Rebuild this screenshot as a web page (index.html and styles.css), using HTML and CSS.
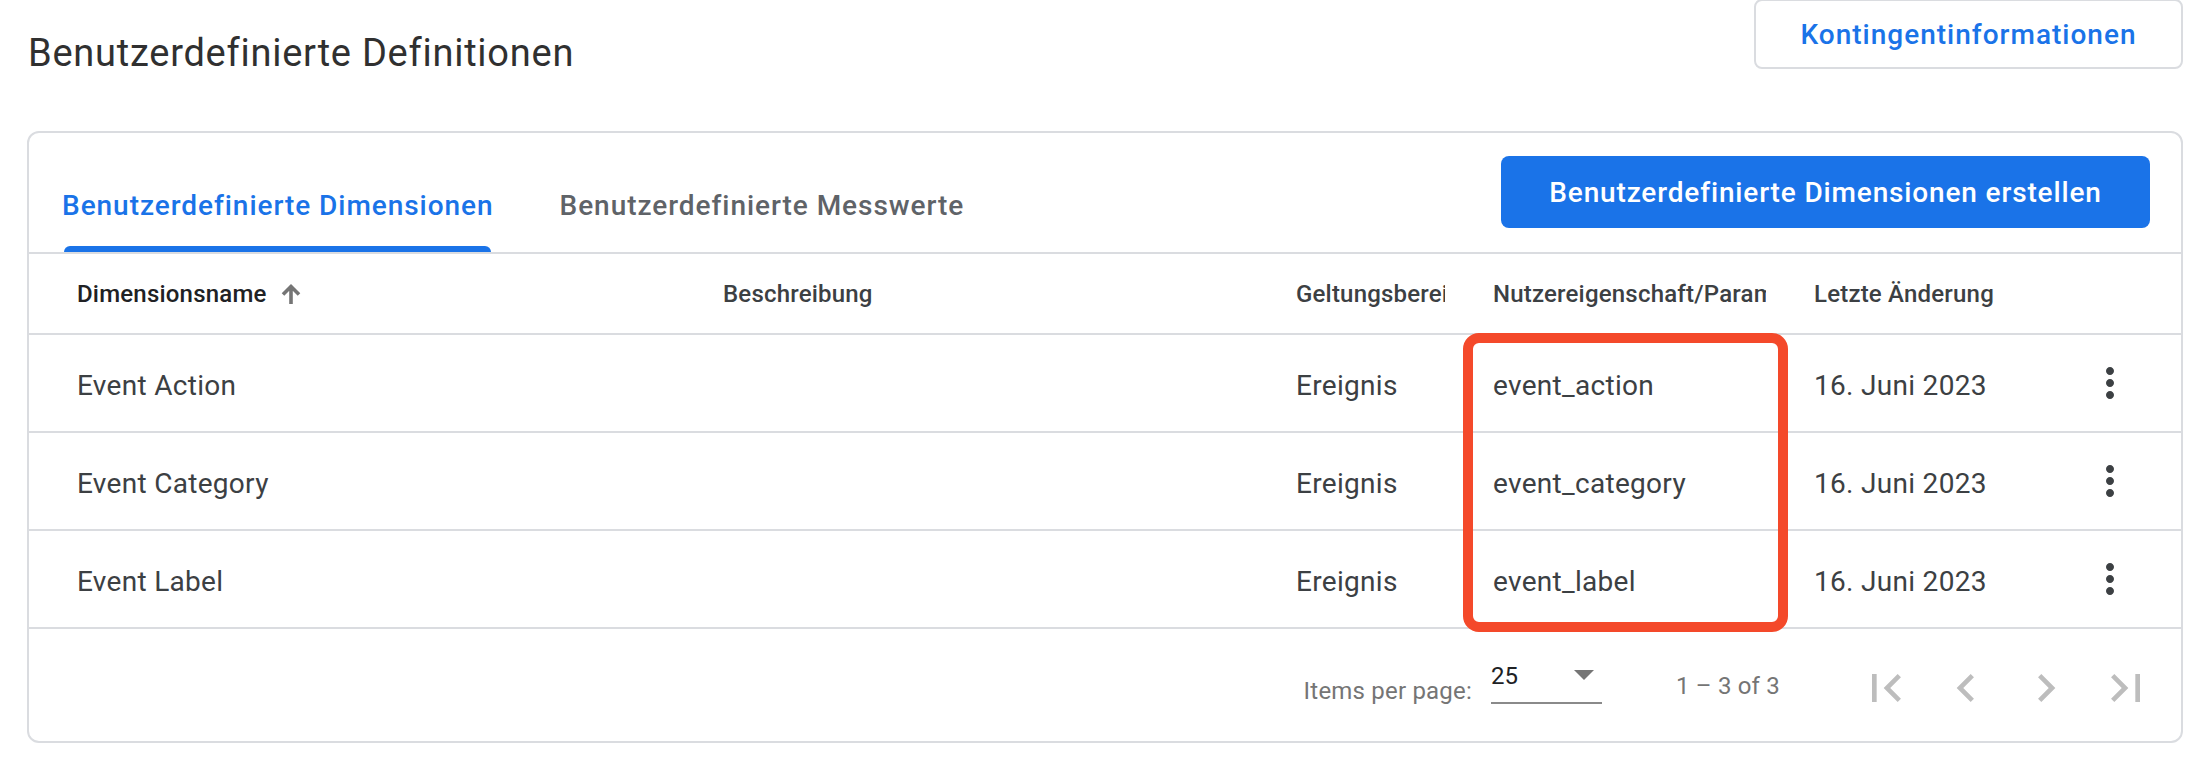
FILE: index.html
```html
<!DOCTYPE html>
<html lang="de">
<head>
<meta charset="utf-8">
<title>Benutzerdefinierte Definitionen</title>
<link rel="stylesheet" href="styles.css">
</head>
<body>
<div class="page">
  <header class="page-header">
    <h1 class="page-title">Benutzerdefinierte Definitionen</h1>
    <button class="btn-outline">Kontingentinformationen</button>
  </header>

  <section class="card">
    <div class="tabbar">
      <div class="tab tab-active">
        <span class="tab-label">Benutzerdefinierte Dimensionen</span>
        <span class="tab-ink"></span>
      </div>
      <div class="tab">
        <span class="tab-label">Benutzerdefinierte Messwerte</span>
      </div>
      <button class="btn-primary">Benutzerdefinierte Dimensionen erstellen</button>
    </div>

    <div class="table">
      <div class="row row-head">
        <div class="cell cell-sorted">
          <span>Dimensionsname</span>
          <svg class="sort-icon" viewBox="0 0 24 24"><path d="M12 22V5M4 12.5L12 4.5l8 8"/></svg>
        </div>
        <div class="cell">Beschreibung</div>
        <div class="cell">Geltungsbereich</div>
        <div class="cell">Nutzereigenschaft/Parameter</div>
        <div class="cell">Letzte Änderung</div>
        <div class="cell"></div>
      </div>

      <div class="row row-data">
        <div class="cell">Event Action</div>
        <div class="cell"></div>
        <div class="cell">Ereignis</div>
        <div class="cell">event_action</div>
        <div class="cell">16. Juni 2023</div>
        <div class="cell cell-menu"><svg class="menu-icon" viewBox="0 0 24 24"><path d="M12 8c1.1 0 2-.9 2-2s-.9-2-2-2-2 .9-2 2 .9 2 2 2zm0 2c-1.1 0-2 .9-2 2s.9 2 2 2 2-.9 2-2-.9-2-2-2zm0 6c-1.1 0-2 .9-2 2s.9 2 2 2 2-.9 2-2-.9-2-2-2z"/></svg></div>
      </div>

      <div class="row row-data">
        <div class="cell">Event Category</div>
        <div class="cell"></div>
        <div class="cell">Ereignis</div>
        <div class="cell">event_category</div>
        <div class="cell">16. Juni 2023</div>
        <div class="cell cell-menu"><svg class="menu-icon" viewBox="0 0 24 24"><path d="M12 8c1.1 0 2-.9 2-2s-.9-2-2-2-2 .9-2 2 .9 2 2 2zm0 2c-1.1 0-2 .9-2 2s.9 2 2 2 2-.9 2-2-.9-2-2-2zm0 6c-1.1 0-2 .9-2 2s.9 2 2 2 2-.9 2-2-.9-2-2-2z"/></svg></div>
      </div>

      <div class="row row-data">
        <div class="cell">Event Label</div>
        <div class="cell"></div>
        <div class="cell">Ereignis</div>
        <div class="cell">event_label</div>
        <div class="cell">16. Juni 2023</div>
        <div class="cell cell-menu"><svg class="menu-icon" viewBox="0 0 24 24"><path d="M12 8c1.1 0 2-.9 2-2s-.9-2-2-2-2 .9-2 2 .9 2 2 2zm0 2c-1.1 0-2 .9-2 2s.9 2 2 2 2-.9 2-2-.9-2-2-2zm0 6c-1.1 0-2 .9-2 2s.9 2 2 2 2-.9 2-2-.9-2-2-2z"/></svg></div>
      </div>
    </div>

    <div class="paginator">
      <span class="pg-label">Items per page:</span>
      <div class="pg-select">
        <span class="pg-value">25</span>
        <span class="pg-arrow"></span>
      </div>
      <span class="pg-range">1 – 3 of 3</span>
      <svg class="pg-icon pg-first" viewBox="0 0 24 24"><path d="M18.41 16.59L13.82 12l4.59-4.59L17 6l-6 6 6 6zM6 6h2v12H6z"/></svg>
      <svg class="pg-icon" viewBox="0 0 24 24"><path d="M15.41 7.41L14 6l-6 6 6 6 1.41-1.41L10.83 12z"/></svg>
      <svg class="pg-icon" viewBox="0 0 24 24"><path d="M10 6L8.59 7.41 13.17 12l-4.58 4.59L10 18l6-6z"/></svg>
      <svg class="pg-icon" viewBox="0 0 24 24"><path d="M5.59 7.41L10.18 12l-4.59 4.59L7 18l6-6-6-6zM16 6h2v12h-2z"/></svg>
    </div>

    <div class="highlight"></div>
  </section>
</div>
</body>
</html>
```

FILE: styles.css
```css
* { box-sizing: border-box; }

html, body {
  margin: 0;
  padding: 0;
  background: #ffffff;
}

body {
  font-family: Roboto, "Liberation Sans", Arial, sans-serif;
  color: #3c4043;
  width: 2200px;
}

.page {
  padding: 0 17px 0 27px;
}

/* ---------- header ---------- */
.page-header {
  display: flex;
  justify-content: space-between;
  align-items: flex-start;
}

.page-title {
  margin: 29px 0 0 1px;
  font-size: 38px;
  line-height: 48px;
  font-weight: 400;
  letter-spacing: 0.75px;
  color: #303030;
}

.btn-outline {
  margin-top: -1px;
  width: 429px;
  height: 70px;
  border: 2px solid #dadce0;
  border-radius: 8px;
  background: #fff;
  color: #1a73e8;
  font-family: Roboto, "Liberation Sans", Arial, sans-serif;
  font-size: 28px;
  font-weight: 500;
  letter-spacing: 1px;
  padding: 0;
}

/* ---------- card ---------- */
.card {
  position: relative;
  margin-top: 54px;
  border: 2px solid #dadce0;
  border-radius: 12px;
  background: #fff;
}

.tabbar {
  display: flex;
  align-items: stretch;
  height: 121px;
  border-bottom: 2px solid #dadce0;
}

.tab {
  display: flex;
  flex-direction: column;
  padding-top: 57px;
  margin-left: 66px;
}

.tab-active {
  margin-left: 33px;
}

.tab-label {
  font-size: 28px;
  line-height: 32px;
  font-weight: 500;
  letter-spacing: 0.95px;
  color: #5f6368;
  white-space: nowrap;
}

.tab-active .tab-label {
  color: #1a73e8;
}

.tab-ink {
  margin: auto 3px 0 2px;
  height: 6px;
  background: #1a73e8;
  border-radius: 6px 6px 0 0;
}

.btn-primary {
  align-self: flex-start;
  margin: 23px 31px 0 auto;
  width: 649px;
  height: 72px;
  border: none;
  border-radius: 8px;
  background: #1a73e8;
  color: #fff;
  font-family: Roboto, "Liberation Sans", Arial, sans-serif;
  font-size: 28px;
  font-weight: 500;
  letter-spacing: 0.85px;
  padding: 0;
}

/* ---------- table ---------- */
.row {
  display: grid;
  grid-template-columns: 598px 525px 149px 273px 224px 1fr;
  column-gap: 48px;
  align-items: center;
  padding-left: 48px;
  border-bottom: 2px solid #dadce0;
  color: #3c4043;
}

.row-head {
  height: 81px;
  font-size: 24px;
  line-height: 28px;
  font-weight: 500;
  letter-spacing: 0.2px;
}

.row-data {
  height: 98px;
  padding-top: 5px;
  font-size: 28px;
  line-height: 32px;
  letter-spacing: 0.3px;
}

.cell {
  min-width: 0;
  white-space: nowrap;
  overflow: hidden;
}

.cell-sorted {
  display: flex;
  align-items: center;
  gap: 12px;
  color: #202124;
}

.sort-icon {
  width: 24px;
  height: 24px;
  fill: none;
  stroke: #757575;
  stroke-width: 3.6;
  stroke-linejoin: miter;
  flex: none;
}

.cell-menu {
  display: flex;
  align-items: center;
  margin-top: -5px;
}

.menu-icon {
  width: 48px;
  height: 48px;
  fill: #3c4043;
}

/* ---------- paginator ---------- */
.paginator {
  display: flex;
  justify-content: flex-end;
  align-items: flex-start;
  height: 112px;
  padding-right: 27px;
  color: #757575;
  font-size: 24px;
  line-height: 28px;
}

.pg-label {
  margin-top: 48px;
  letter-spacing: 0.2px;
}

.pg-select {
  display: flex;
  justify-content: space-between;
  align-items: flex-start;
  width: 111px;
  height: 42px;
  margin: 33px 0 0 19px;
  border-bottom: 2px solid #8a8a8a;
}

.pg-value {
  color: #202124;
}

.pg-arrow {
  margin: 8px 8px 0 0;
  width: 0;
  height: 0;
  border-left: 10px solid transparent;
  border-right: 10px solid transparent;
  border-top: 10px solid #757575;
}

.pg-range {
  margin: 43px 0 0 74px;
  letter-spacing: 0.2px;
}

.pg-icon {
  width: 56px;
  height: 56px;
  margin: 31px 0 0 24px;
  fill: #bdbdbd;
}

.pg-first {
  margin-left: 78px;
}

/* ---------- annotation overlay ---------- */
.highlight {
  position: absolute;
  left: 1434px;
  top: 200px;
  width: 325px;
  height: 299px;
  border: 10px solid #f4492a;
  border-radius: 16px;
  pointer-events: none;
}
```
